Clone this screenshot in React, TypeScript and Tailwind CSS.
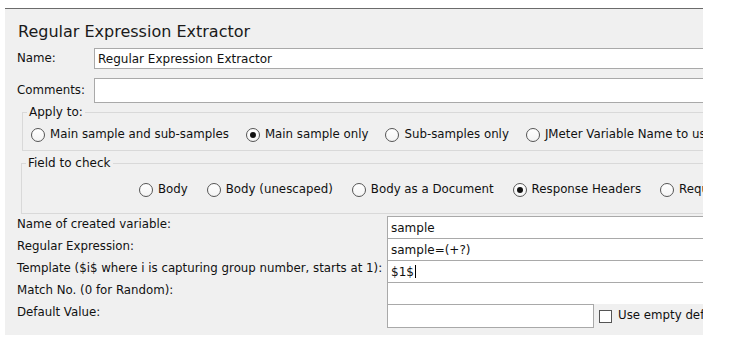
import React from "react";

type RadioProps = { label: string; checked?: boolean };

const Radio = ({ label, checked = false }: RadioProps) => (
  <span className="flex items-center gap-[5px] whitespace-nowrap">
    <span className="flex h-[14px] w-[14px] shrink-0 items-center justify-center rounded-full border border-[#555] bg-gradient-to-b from-white to-[#f4f4f4]">
      {checked && <span className="h-[6px] w-[6px] rounded-full bg-[#111]" />}
    </span>
    <span>{label}</span>
  </span>
);

const fields = [
  { label: "Name of created variable:", value: "sample" },
  { label: "Regular Expression:", value: "sample=(+?)" },
  { label: "Template ($i$ where i is capturing group number, starts at 1):", value: "$1$", caret: true },
  { label: "Match No. (0 for Random):", value: "" },
];

const App = () => {
  return (
    <div className="h-[349px] w-[742px] overflow-hidden bg-white font-['DejaVu_Sans',sans-serif] text-[11.8px] text-[#111]">
      {/* panel */}
      <div className="ml-[5px] mt-[8px] h-[327px] w-[698px] overflow-hidden border-t border-[#6b6b6b] bg-[#f0f0f0]">
        <div className="w-[800px]">
          {/* title */}
          <p className="mt-[12px] h-[22px] pl-[13px] text-[16px] leading-[22px] text-[#1a1a1a]">Regular Expression Extractor</p>

          {/* name */}
          <div className="mt-[5px] flex h-[21px] items-center">
            <span className="w-[89px] pl-[12px]">Name:</span>
            <div className="flex h-full flex-1 items-center border border-[#a9a9a9] bg-white pl-[3px] text-[12px]">Regular Expression Extractor</div>
          </div>

          {/* comments */}
          <div className="mt-[9px] flex h-[25px] items-center">
            <span className="w-[89px] pl-[12px]">Comments:</span>
            <div className="h-full flex-1 border border-[#a9a9a9] bg-white" />
          </div>

          {/* apply to */}
          <fieldset className="ml-[17px] mt-[2px] border border-[#d9d9d9]">
            <legend className="ml-[4px] px-[2px] text-[12px] leading-[14px]">Apply to:</legend>
            <div className="mb-[7px] mt-[8px] flex h-[16px] items-center gap-[17px] pl-[8px]">
              <Radio label="Main sample and sub-samples" />
              <Radio label="Main sample only" checked />
              <Radio label="Sub-samples only" />
              <Radio label="JMeter Variable Name to use" />
            </div>
          </fieldset>

          {/* field to check */}
          <fieldset className="ml-[16px] mt-[5px] border border-[#d9d9d9]">
            <legend className="ml-[4px] px-[2px] text-[12px] leading-[14px]">Field to check</legend>
            <div className="mb-[15px] mt-[12px] flex h-[16px] items-center gap-[19px] pl-[117px]">
              <Radio label="Body" />
              <Radio label="Body (unescaped)" />
              <Radio label="Body as a Document" />
              <Radio label="Response Headers" checked />
              <Radio label="Request Headers" />
            </div>
          </fieldset>

          {/* variable fields */}
          <div className="mt-[2px] flex flex-col">
            {fields.map((f) => (
              <div key={f.label} className="flex h-[22px]">
                <span className="w-[382px] whitespace-nowrap pl-[12px]">{f.label}</span>
                <div className="flex flex-1 items-center border-l border-t border-[#a9a9a9] bg-white pl-[3px] text-[12px]">
                  {f.value}
                  {f.caret && <span className="ml-[1px] h-[13px] w-[1px] bg-black" />}
                </div>
              </div>
            ))}
            <div className="flex h-[24px]">
              <span className="w-[382px] pl-[12px]">Default Value:</span>
              <div className="w-[207px] border border-[#a9a9a9] bg-white" />
              <label className="ml-[5px] flex items-center gap-[6px] whitespace-nowrap">
                <span className="h-[13px] w-[13px] border border-[#555] bg-white" />
                Use empty default value
              </label>
            </div>
          </div>
        </div>
      </div>
    </div>
  );
};

export default App;
